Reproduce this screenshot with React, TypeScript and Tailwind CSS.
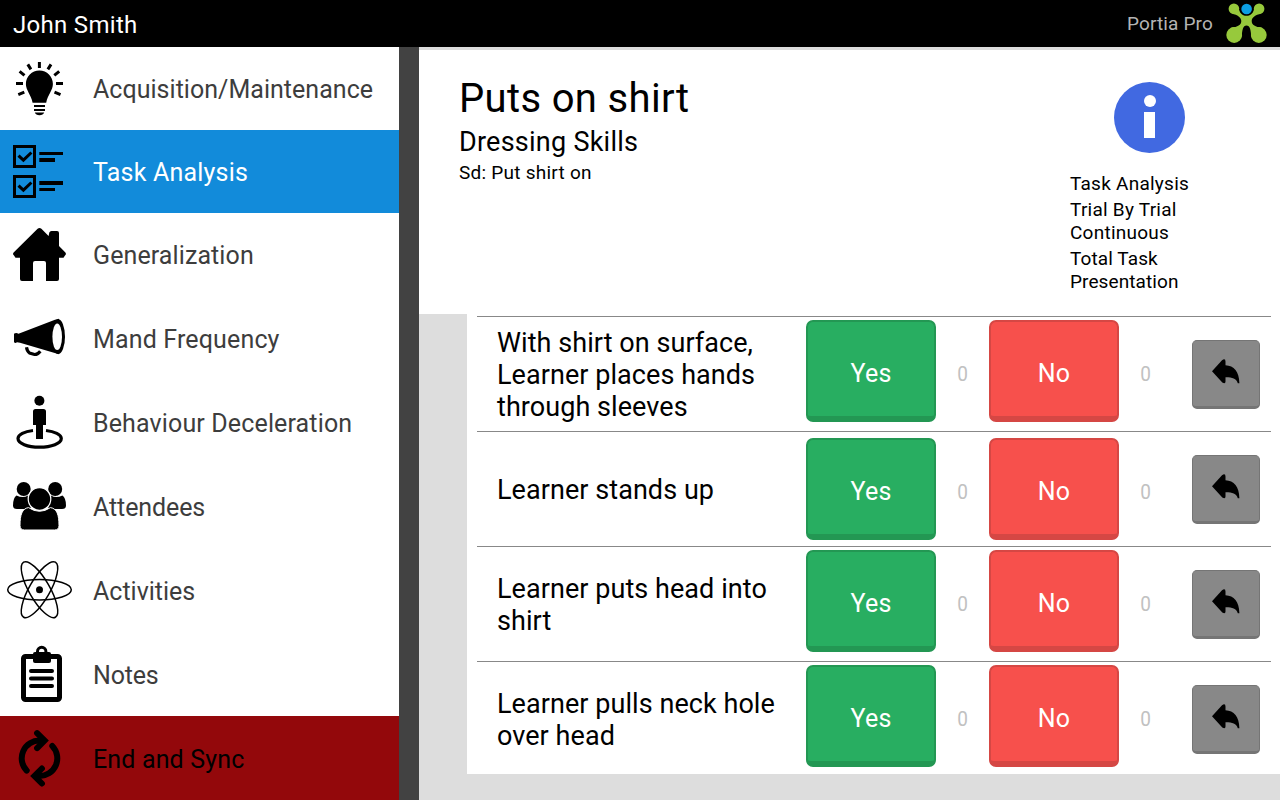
import React from 'react';
import { clsx } from 'clsx';

function BulbIcon() {
  return (
    <svg className="h-[83px] w-20" viewBox="0 0 80 83">
      <path d="M39.4 23.6C31.8 23.6 25.9 29.6 25.9 37C25.9 43.5 31 47.5 32.6 55.7H46.2C47.8 47.5 52.9 43.5 52.9 37C52.9 29.6 47 23.6 39.4 23.6Z" />
      <path d="M34 58h11v2H34zM34 62h11v2H34zM34.8 65.5h9.4c-.8 1.7-2.2 2.7-4.7 2.7s-3.9-1-4.7-2.7z" />
      <path
        d="M39.4 15V21M16 36.5h7M56 36.5h7M19.6 24.4l4.9 4M59.2 24.4l-4.9 4M27.8 17.4l3.1 5M51 17.4l-3.1 5M18.3 47.6l6-2.5M60.5 47.6l-6-2.5"
        stroke="black"
        strokeWidth={3}
      />
    </svg>
  );
}

function TaskIcon() {
  return (
    <svg className="h-[83px] w-20" viewBox="0 0 80 83">
      <g fill="none" stroke="black" strokeWidth={3}>
        <path d="M14.5 16.5h20v20h-20zM14.5 46.5h20v20h-20z" />
        <path d="M18.5 25.6l4.9 4.6 8-7.7M18.5 55.6l4.9 4.6 8-7.7" />
      </g>
      <path d="M39.3 22H63v3H39.3zM39.3 28H55v4H39.3zM39.3 51H63v4H39.3zM39.3 58H55v3H39.3z" />
    </svg>
  );
}

function HomeIcon() {
  return (
    <svg className="h-[83px] w-20" viewBox="0 0 80 83">
      <path d="M37.6 15.8Q39.5 14.2 41.4 15.8L48.6 22.9L49.3 19.5Q49.8 18 51.5 18H57Q59 18 59 20V33L65.4 39.4Q66.6 41 65 42.6L63.5 44.7H59V66Q59 68 57 68H46V50Q46 48 44 48H35Q33 48 33 50V68H22Q20 68 20 66V44.7H15.5L14 42.6Q12.3 41 13.6 39.4Z" />
    </svg>
  );
}

function MegaphoneIcon() {
  return (
    <svg className="h-[84px] w-20" viewBox="0 0 80 84">
      <path d="M14 37.8Q16 36.5 18.5 37.7L55 23.7L59 22.8V58.2L20 46.8L17 46.3Q15 47.8 14 46Z" />
      <ellipse cx="58.2" cy="40.7" rx="6.8" ry="17.4" />
      <ellipse cx="57.2" cy="40.8" rx="4.8" ry="13.2" fill="white" />
      <path d="M26.5 51.3C27 54.5 28 56 29.5 57L34.5 58.5Q37.5 58.7 40.3 55.2" fill="none" stroke="black" strokeWidth={3.2} />
    </svg>
  );
}

function PersonIcon() {
  return (
    <svg className="h-[84px] w-20" viewBox="0 0 80 84">
      <circle cx="39.4" cy="20.7" r="5" />
      <path d="M35.5 29h8Q46 29 46 31.5V45H43V59H36V45H33V31.5Q33 29 35.5 29Z" />
      <path
        d="M33 50.5C24.5 51.5 18 54.6 18 58.6C18 63.5 27.5 67.2 39.5 67.2S61.3 63.5 61.3 58.6C61.3 54.6 54.5 51.5 46 50.5"
        fill="none"
        stroke="black"
        strokeWidth={3.2}
      />
    </svg>
  );
}

function PeopleIcon() {
  return (
    <svg className="h-[84px] w-20" viewBox="0 0 80 84">
      <circle cx="23.7" cy="25" r="7" />
      <circle cx="55.2" cy="25" r="7" />
      <path d="M16.5 31.5Q23 34.5 28 31.5L31 45H17Q13 45 13 41.5Q13 34 16.5 31.5ZM62.4 31.5Q56 34.5 51 31.5L48 45H62Q66 45 66 41.5Q66 34 62.4 31.5Z" />
      <path
        d="M28.5 43.6Q39.5 51 50.5 43.6C57 44.5 59 51 59 61.5Q59 66 54.5 66H24.5Q20 66 20 61.5C20 51 22 44.5 28.5 43.6Z"
        stroke="white"
        strokeWidth={1}
      />
      <circle cx="39.5" cy="35" r="11.3" stroke="white" strokeWidth={1.2} />
    </svg>
  );
}

function AtomIcon() {
  return (
    <svg className="h-[84px] w-20" viewBox="0 0 80 84">
      <g fill="none" stroke="black" strokeWidth={1.5}>
        <ellipse cx="39.5" cy="41.7" rx="31.8" ry="10.3" />
        <ellipse cx="39.5" cy="41.7" rx="31.8" ry="10.3" transform="rotate(60 39.5 41.7)" />
        <ellipse cx="39.5" cy="41.7" rx="31.8" ry="10.3" transform="rotate(-60 39.5 41.7)" />
      </g>
      <circle cx="39.5" cy="41.7" r="3.5" />
    </svg>
  );
}

function NotesIcon() {
  return (
    <svg className="h-[84px] w-20" viewBox="0 0 80 84">
      <rect x="23.5" y="24.5" width="36" height="43" rx="2" fill="none" stroke="black" strokeWidth={5} />
      <rect x="33" y="20" width="18" height="11" rx="2" />
      <path d="M37.5 21v-1.5a4.2 4.2 0 0 1 8.4 0V21" fill="none" stroke="black" strokeWidth={3} />
      <path d="M31 38.9H52M31 46.5H52M31 53.9H52" stroke="black" strokeWidth={4} strokeLinecap="round" />
    </svg>
  );
}

function SyncIcon() {
  return (
    <svg className="h-[84px] w-20" viewBox="0 0 80 84">
      <g fill="none" stroke="black" strokeWidth={6} strokeLinecap="round">
        <path d="M26.7 54.6A17.7 17.7 0 0 1 40 24.6" />
        <path d="M37.1 17.1L44.6 24.6L37.1 32.1" />
        <path d="M52.3 30A17.7 17.7 0 0 1 39 60" />
        <path d="M41.9 67.5L34.4 60L41.9 52.5" />
      </g>
    </svg>
  );
}

function PortiaLogo() {
  return (
    <svg className="-mt-px h-10 w-[41px]" viewBox="0 0 41 40">
      <g fill="#97c93c">
        <circle cx="7.9" cy="5.8" r="5.3" />
        <circle cx="33.1" cy="5.8" r="5.3" />
        <circle cx="8.2" cy="32" r="7.9" />
        <circle cx="32.8" cy="32" r="7.9" />
        <path d="M12.8 5C13.2 9.5 16 12.8 20.5 12.8S27.8 9.5 28.2 5L35 10.7C29.5 11.5 25.7 14.5 25.7 18C25.7 22 29.5 24 35.5 24.6L25.3 34C24.8 27 24 22.6 20.5 22.6S16.2 27 15.7 34L5.5 24.6C11.5 24 15.3 22 15.3 18C15.3 14.5 11.5 11.5 6 10.7Z" />
      </g>
      <circle cx="20.6" cy="6" r="5.3" fill="#0c9ee3" />
    </svg>
  );
}

function InfoIcon() {
  return (
    <svg className="h-[71px] w-[71px]" viewBox="0 0 71 71">
      <circle cx="35.5" cy="35.5" r="35.5" fill="#4169e1" />
      <circle cx="36" cy="19" r="6" fill="white" />
      <path d="M30 30h11v26H30z" fill="white" />
    </svg>
  );
}

function UndoIcon() {
  return (
    <svg className="h-[25px] w-7" viewBox="0 0 28 25">
      <path d="M0 12.3L10 1.2Q13.5-1 13.5 2.5V6.3C22 6.8 27.2 12.5 27.4 24.2H25.8C24.3 19.5 20 18.2 13.5 18.3V22.5Q13.5 25.5 10.3 23.5Z" />
    </svg>
  );
}

interface MenuItem {
  label: string;
  icon: React.ReactNode;
  className: string;
}

const menuItems: MenuItem[] = [
  { label: 'Acquisition/Maintenance', icon: <BulbIcon />, className: 'h-[83px] text-[#3d3d3d] tracking-[0.03px]' },
  { label: 'Task Analysis', icon: <TaskIcon />, className: 'h-[83px] bg-[#128bda] text-white tracking-[0.2px]' },
  { label: 'Generalization', icon: <HomeIcon />, className: 'h-[83px] text-[#3d3d3d] tracking-[0.1px]' },
  { label: 'Mand Frequency', icon: <MegaphoneIcon />, className: 'h-[84px] text-[#3d3d3d] tracking-[0.15px]' },
  { label: 'Behaviour Deceleration', icon: <PersonIcon />, className: 'h-[84px] text-[#3d3d3d] tracking-[0.14px]' },
  { label: 'Attendees', icon: <PeopleIcon />, className: 'h-[84px] text-[#3d3d3d] -tracking-[0.1px]' },
  { label: 'Activities', icon: <AtomIcon />, className: 'h-[84px] text-[#3d3d3d] tracking-normal' },
  { label: 'Notes', icon: <NotesIcon />, className: 'h-[84px] text-[#3d3d3d] -tracking-[0.2px]' },
  { label: 'End and Sync', icon: <SyncIcon />, className: 'h-[84px] bg-[#93080b] text-black tracking-[0.15px]' },
];

interface Step {
  text: string;
  offset: string;
}

const steps: Step[] = [
  { text: 'With shirt on surface, Learner places hands through sleeves', offset: 'pt-[3px]' },
  { text: 'Learner stands up', offset: 'pt-[6px]' },
  { text: 'Learner puts head into shirt', offset: 'pt-[3px]' },
  { text: 'Learner pulls neck hole over head', offset: 'pt-[3px]' },
];

function AnswerButton({ answer }: { answer: 'Yes' | 'No' }) {
  return (
    <button
      className={clsx(
        'h-[102px] w-[130px] rounded-[7px] border-2 border-b-[6px] pt-[9px] text-[25px] tracking-[0.2px] text-white',
        answer === 'Yes' ? 'border-[#239753] bg-[#28ae61]' : 'border-[#d54744] bg-[#f7504c]'
      )}
    >
      {answer}
    </button>
  );
}

function Count({ value }: { value: number }) {
  return (
    <div className="flex h-[108px] w-[53px] items-center justify-center text-xl text-[#c1c1c1]">
      <span className="scale-x-95">{value}</span>
    </div>
  );
}

function StepRow({ step }: { step: Step }) {
  return (
    <div className="flex h-[115px] border-t border-[#888888] pl-5">
      <div className="flex w-[309px] items-center pt-0.5 pr-6 text-[27px] leading-8 tracking-[0.06px] text-black">
        {step.text}
      </div>
      <div className={clsx('flex', step.offset)}>
        <AnswerButton answer="Yes" />
        <Count value={0} />
        <AnswerButton answer="No" />
        <Count value={0} />
      </div>
      <button className="mt-[23px] ml-5 flex h-[69px] w-[68px] justify-center rounded-[5px] border border-b-[3px] border-[#757575] bg-[#888888] pt-[18px]">
        <UndoIcon />
      </button>
    </div>
  );
}

export default function App() {
  return (
    <div className="flex h-[800px] w-[1280px] flex-col overflow-hidden bg-[#dddddd] font-['Roboto',sans-serif]">
      <header className="flex h-[47px] shrink-0 items-center bg-black pr-[13px] pl-[13px]">
        <h1 className="flex-1 pt-0.5 text-2xl tracking-[0.3px] text-white">John Smith</h1>
        <span className="mr-[13px] pt-px text-[19px] tracking-[0.15px] text-[#b4b4b4]">Portia Pro</span>
        <PortiaLogo />
      </header>

      <div className="flex flex-1">
        <nav className="w-[399px] bg-white">
          {menuItems.map((item) => (
            <div key={item.label} className={clsx('flex items-center', item.className)}>
              {item.icon}
              <span className="pt-[3px] pl-[13px] text-[25px]">{item.label}</span>
            </div>
          ))}
        </nav>
        <div className="w-5 bg-[#424242]" />

        <main className="flex-1 pt-[3px]">
          {/* Program details */}
          <section className="flex h-[264px] bg-white pl-10 text-black">
            <div className="w-[611px] pt-[25px]">
              <h2 className="text-[40px] leading-[48px] tracking-[0.35px]">Puts on shirt</h2>
              <h3 className="pt-[3px] text-[27px] leading-8 tracking-[0.25px]">Dressing Skills</h3>
              <p className="pt-[3px] text-[19px] leading-[23px] tracking-[0.25px]">Sd: Put shirt on</p>
            </div>
            <div className="w-[159px] pt-8">
              <div className="flex justify-center">
                <InfoIcon />
              </div>
              <div className="flex flex-col gap-[3px] pt-[19px] text-[19px] leading-[23px] tracking-[0.25px]">
                <p>Task Analysis</p>
                <p>Trial By Trial Continuous</p>
                <p className="tracking-[0.1px]">Total Task Presentation</p>
              </div>
            </div>
          </section>

          {/* Steps to score */}
          <section className="ml-12 h-[460px] overflow-hidden bg-white pt-0.5 pr-[9px] pl-2.5">
            {steps.map((step) => (
              <StepRow key={step.text} step={step} />
            ))}
          </section>
        </main>
      </div>
    </div>
  );
}
